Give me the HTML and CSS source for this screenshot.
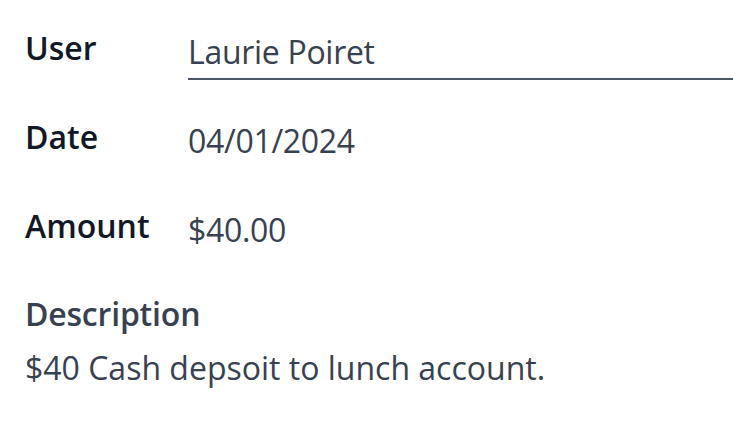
FILE: index.html
```html
<!DOCTYPE html>
<html>
<head>
<meta charset="utf-8">
<link rel="stylesheet" href="styles.css">
</head>
<body>
<div class="form">
  <div class="grid">
    <div class="label">User</div>
    <div class="value field">Laurie Poiret</div>
    <div class="label">Date</div>
    <div class="value">04/01/2024</div>
    <div class="label">Amount</div>
    <div class="value">$40.00</div>
  </div>
  <div class="desc">
    <div class="desc-label">Description</div>
    <div class="desc-text">$40 Cash depsoit to lunch account.</div>
  </div>
</div>
</body>
</html>
```

FILE: styles.css
```css
html, body {
  margin: 0;
  padding: 0;
  background: #ffffff;
}
body {
  font-family: "Open Sans", "Noto Sans", sans-serif;
  font-size: 32px;
}
.form {
  padding: 26px 0 0 25px;
}
.grid {
  display: grid;
  grid-template-columns: 163px 1fr;
  row-gap: 35px;
  align-items: start;
}
.label {
  font-weight: 600;
  color: #111827;
  line-height: 44px;
}
.value {
  color: #374151;
  line-height: 44px;
  padding: 4px 0 4px;
  letter-spacing: -0.3px;
  border-bottom: 2px solid transparent;
}
.value.field {
  border-bottom-color: #4b5563;
}
.desc {
  margin-top: 34px;
}
.desc-label {
  font-weight: 600;
  color: #374151;
  line-height: 44px;
  letter-spacing: -0.2px;
}
.desc-text {
  color: #374151;
  line-height: 44px;
  margin-top: 10px;
}
```
